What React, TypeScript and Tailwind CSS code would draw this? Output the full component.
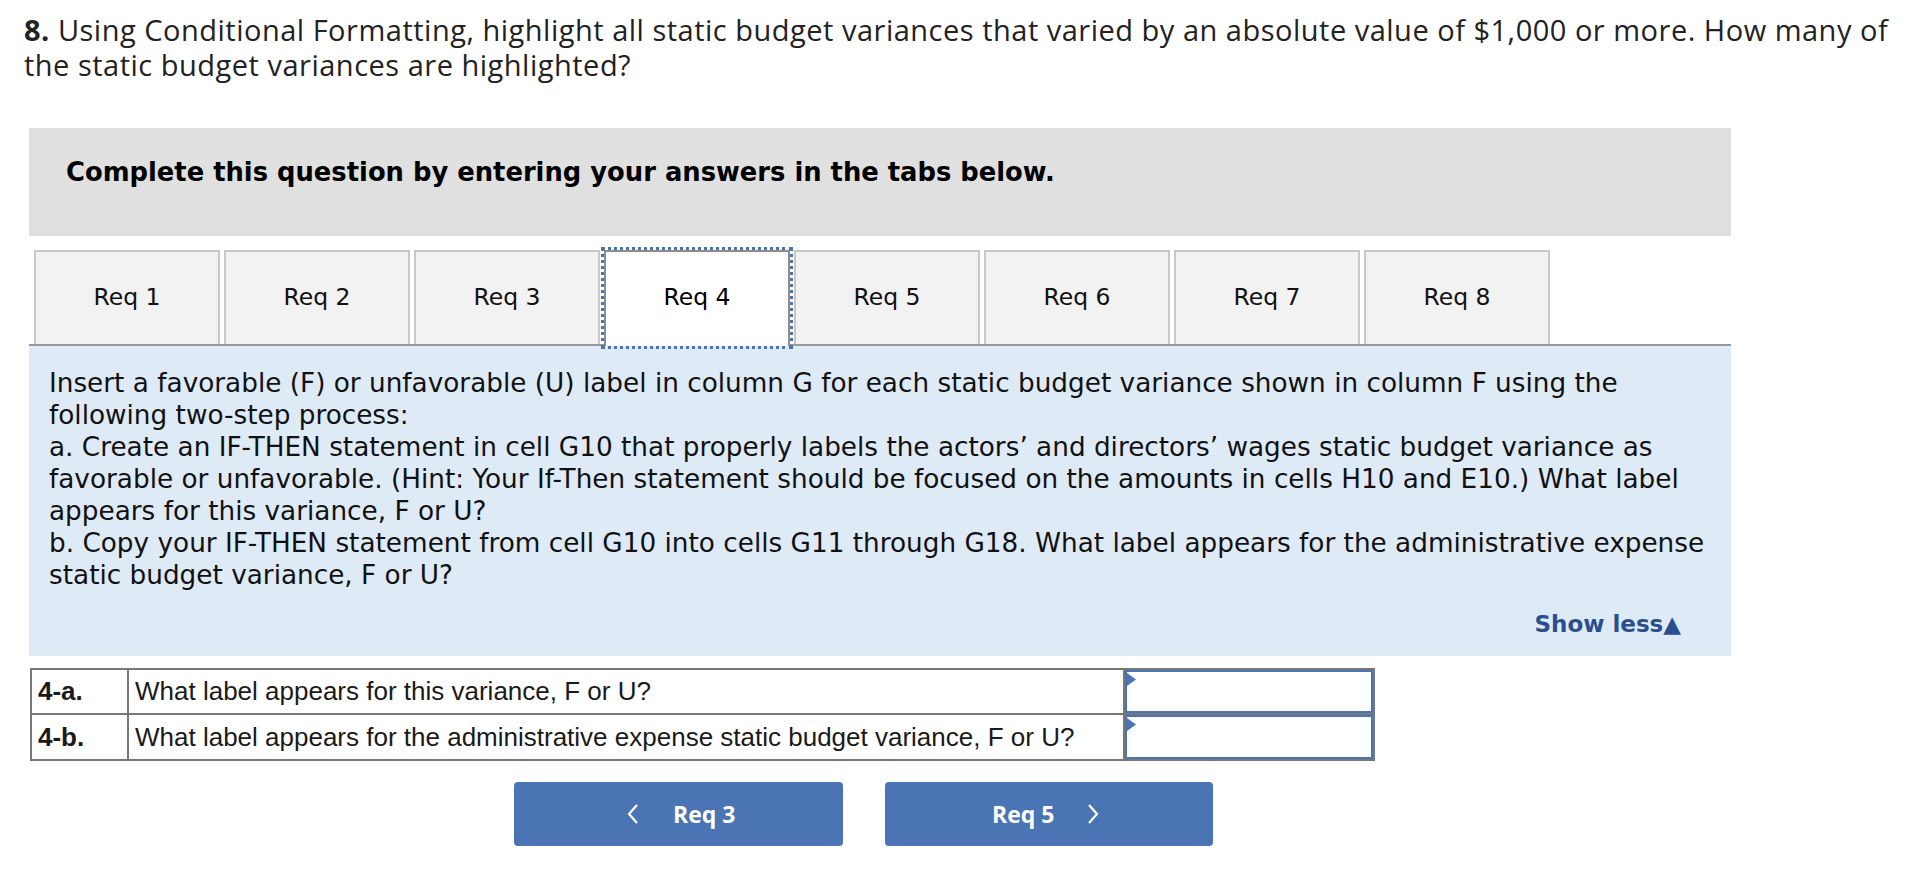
import React from "react";

const tabs = ["Req 1", "Req 2", "Req 3", "Req 4", "Req 5", "Req 6", "Req 7", "Req 8"];

function Marker() {
  return (
    <svg width="9" height="13" viewBox="0 0 9 13" className="absolute left-0 top-[1px]">
      <polygon points="0,0 9,6.5 0,13" fill="#4a74b4" />
    </svg>
  );
}

export default function App() {
  return (
    <div className="w-[1916px] min-h-[887px] bg-white text-[#1a1a1a]">
      {/* Title */}
      <div className="h-[128px] pl-[24px] pt-[12px]">
        <p className="text-[29px] leading-[35px] tracking-[0.5px] text-[#222]" style={{ fontFamily: "'Open Sans', 'Liberation Sans', sans-serif" }}>
          <b>8.</b> Using Conditional Formatting, highlight all static budget variances that varied by an absolute value of $1,000 or more. How many of the static budget variances are highlighted?
        </p>
      </div>

      <div className="ml-[29px] w-[1702px]" style={{ fontFamily: "'DejaVu Sans', Verdana, sans-serif" }}>
        {/* Gray instructions */}
        <div className="h-[108px] bg-[#e0e0e0] pl-[37px] pt-[29px]">
          <p className="text-[25.8px] font-bold leading-[30px] text-black">
            Complete this question by entering your answers in the tabs below.
          </p>
        </div>

        {/* Tabs */}
        <div className="mt-[14px] flex h-[96px] items-start gap-[4px] border-b-2 border-[#999] pl-[5px]">
          {tabs.map((t) => {
            const active = t === "Req 4";
            return active ? (
              <div
                key={t}
                className="relative z-10 flex h-[96px] w-[186px] items-start justify-center border-x-2 border-t-2 border-[#8c8c8c] bg-white pt-[30px] text-[23.5px] leading-[30px] text-black outline-[3px] outline-dotted outline-[#4a74b4]"
              >
                {t}
              </div>
            ) : (
              <div
                key={t}
                className="flex h-[94px] w-[186px] items-start justify-center border-x-2 border-t-2 border-[#c8c8c8] bg-[#f2f2f2] pt-[30px] text-[23.5px] leading-[30px] text-[#111]"
              >
                {t}
              </div>
            );
          })}
        </div>

        {/* Content */}
        <div className="h-[310px] bg-[#dfeaf7] pl-[20px] pr-[14px] pt-[21px]">
          <p className="text-[26.3px] leading-[32px] text-[#111]">
            Insert a favorable (F) or unfavorable (U) label in column G for each static budget variance shown in column F using the following two-step process:
            <br />
            a. Create an IF-THEN statement in cell G10 that properly labels the actors’ and directors’ wages static budget variance as favorable or unfavorable. (Hint: Your If-Then statement should be focused on the amounts in cells H10 and E10.) What label appears for this variance, F or U?
            <br />
            b. Copy your IF-THEN statement from cell G10 into cells G11 through G18. What label appears for the administrative expense static budget variance, F or U?
          </p>
          <div className="mr-[36px] mt-[21px] text-right text-[23px] font-bold leading-[24px] text-[#2b4f8e]">
            Show less▲
          </div>
        </div>
      </div>

      {/* Table */}
      <div className="ml-[30px] mt-[12px] w-[1345px]" style={{ fontFamily: "'Liberation Sans', Arial, sans-serif" }}>
        <div className="border-2 border-[#777]">
          <div className="flex h-[45px] border-b-2 border-[#777]">
            <div className="flex w-[97px] items-center border-r-2 border-[#777] pl-[6px] text-[26px] font-bold">4-a.</div>
            <div className="flex w-[996px] items-center border-r-2 border-[#777] pl-[6px] text-[26px]">What label appears for this variance, F or U?</div>
            <div className="relative flex-1 border-2 border-[#4a74b4] bg-white">
              <Marker />
            </div>
          </div>
          <div className="flex h-[44px]">
            <div className="flex w-[97px] items-center border-r-2 border-[#777] pl-[6px] text-[26px] font-bold">4-b.</div>
            <div className="flex w-[996px] items-center border-r-2 border-[#777] pl-[6px] text-[26px]">What label appears for the administrative expense static budget variance, F or U?</div>
            <div className="relative flex-1 border-2 border-[#4a74b4] bg-white">
              <Marker />
            </div>
          </div>
        </div>
      </div>

      {/* Nav buttons */}
      <div className="ml-[514px] mt-[21px] flex gap-[42px]" style={{ fontFamily: "'Open Sans', 'Liberation Sans', sans-serif" }}>
        <button className="flex h-[64px] w-[329px] items-center rounded-[4px] bg-[#4a74b4] text-white">
          <svg width="12" height="22" viewBox="0 0 12 22" className="ml-[113px]">
            <polyline points="10,2 2,11 10,20" fill="none" stroke="white" strokeWidth="2.2" />
          </svg>
          <span className="ml-[34px] text-[23px] font-bold">Req 3</span>
        </button>
        <button className="flex h-[64px] w-[328px] items-center rounded-[4px] bg-[#4a74b4] text-white">
          <span className="ml-[107px] text-[23px] font-bold">Req 5</span>
          <svg width="12" height="22" viewBox="0 0 12 22" className="ml-[33px]">
            <polyline points="2,2 10,11 2,20" fill="none" stroke="white" strokeWidth="2.2" />
          </svg>
        </button>
      </div>
    </div>
  );
}
